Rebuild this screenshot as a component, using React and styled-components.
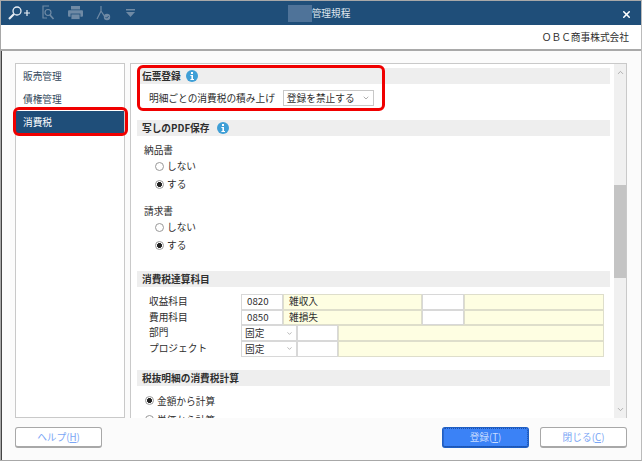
import React from "react";
import styled, { createGlobalStyle } from "styled-components";
import { ChevronUp, ChevronDown, X } from "lucide-react";

const Global = createGlobalStyle`
  html, body { margin: 0; padding: 0; background: #fff; }
  body { font-family: "Noto Sans CJK JP", "Liberation Sans", sans-serif; font-size: 9.7px; color: #2e2e2e; }
`;

const App = () => (
  <Window>
    <Global />
    <TitleBar>
      <Tools>
        <SearchPlusIcon />
        <PreviewIcon />
        <PrintIcon />
        <ApproveIcon />
        <MenuIcon />
      </Tools>
      <Title>
        <Masked />
        管理規程
      </Title>
      <CloseBtn>
        <X size={11} strokeWidth={3.4} color="#fff" />
      </CloseBtn>
    </TitleBar>
    <CompanyBar>ＯＢＣ商事株式会社</CompanyBar>
    <Body>
      <Main>
        <Sidebar>
          <NavItem>販売管理</NavItem>
          <NavItem>債権管理</NavItem>
          <NavItem $active>消費税</NavItem>
        </Sidebar>
        <Panel>
          <Content>
            <SectionHead>
              伝票登録 <InfoIcon gap={5} />
            </SectionHead>
            <SlipRow>
              明細ごとの消費税の積み上げ
              <Select>
                登録を禁止する
                <ChevronDown size={8} color="#888" />
              </Select>
            </SlipRow>

            <SectionHead $top={14}>
              写しのPDF保存 <InfoIcon gap={8} />
            </SectionHead>
            <GroupLabel $top={6}>納品書</GroupLabel>
            <Radio label="しない" />
            <Radio label="する" checked tall />
            <GroupLabel $top={9}>請求書</GroupLabel>
            <Radio label="しない" />
            <Radio label="する" checked tall />

            <SectionHead $top={16}>消費税達算科目</SectionHead>
            <AccountGrid>
              <AccountLabel>収益科目</AccountLabel>
              <WhiteCell $pad={5}>0820</WhiteCell>
              <YellowCell>雑収入</YellowCell>
              <WhiteCell />
              <YellowCell />

              <AccountLabel>費用科目</AccountLabel>
              <WhiteCell $pad={5}>0850</WhiteCell>
              <YellowCell>雑損失</YellowCell>
              <WhiteCell />
              <YellowCell />

              <AccountLabel>部門</AccountLabel>
              <FixedRow />

              <AccountLabel>プロジェクト</AccountLabel>
              <FixedRow />
            </AccountGrid>

            <SectionHead $top={14}>税抜明細の消費税計算</SectionHead>
            <CalcRadios>
              <Radio label="金額から計算" checked flush />
              <Radio label="単価から計算" flush />
            </CalcRadios>
          </Content>
          <ScrollTrack>
            <ChevronUp size={9} color="#999" />
            <ScrollThumb />
            <ChevronDown size={9} color="#999" />
          </ScrollTrack>
        </Panel>
      </Main>
      <Footer>
        <Button>
          ヘルプ(<u>H</u>)
        </Button>
        <FooterRight>
          <Button $primary>
            登録(<u>T</u>)
          </Button>
          <Button>
            閉じる(<u>C</u>)
          </Button>
        </FooterRight>
      </Footer>
    </Body>
    <Callout $x={136} $y={65} $w={248} $h={46} />
    <Callout $x={12} $y={107} $w={115} $h={29} />
  </Window>
);

export default App;

const Radio = ({ label, checked, flush, tall }) => (
  <RadioRow $flush={flush} $tall={tall}>
    <RadioDot $checked={checked} />
    {label}
  </RadioRow>
);

const FixedRow = () => (
  <FixedCells>
    <FixedSelect>
      固定
      <ChevronDown size={7} color="#888" />
    </FixedSelect>
    <WhiteCell />
    <YellowCell />
  </FixedCells>
);

const InfoGlyph = styled.svg`
  margin-left: ${(p) => p.$gap}px;
`;

const InfoIcon = ({ gap }) => (
  <InfoGlyph $gap={gap} width="12" height="12" viewBox="0 0 12 12">
    <circle cx="6" cy="6" r="6" fill="#3f9fd6" />
    <rect x="5" y="2" width="2" height="2" fill="#fff" />
    <path d="M4.4 5h2.6v4h1v1H4.4V9h1V6h-1z" fill="#fff" />
  </InfoGlyph>
);

const SearchPlusIcon = () => (
  <svg width="24" height="16" viewBox="0 0 24 16" fill="none" stroke="#e8eef5">
    <circle cx="10" cy="6" r="4" strokeWidth="1.3" />
    <path d="M7 9 2 14" strokeWidth="2.2" />
    <path d="M17 8h6M20 5v6" strokeWidth="1.2" />
  </svg>
);

const PreviewIcon = () => (
  <svg width="14" height="16" viewBox="0 0 14 16" fill="none" stroke="#6f8aa5" strokeWidth="1.2">
    <path d="M8 1H2v12h4" />
    <circle cx="7" cy="7.5" r="3" />
    <path d="m9 10 3.5 4" strokeWidth="1.7" />
  </svg>
);

const PrintIcon = () => (
  <svg width="15" height="14" viewBox="0 0 15 14" fill="#6f8aa5">
    <rect x="3" y="0" width="9" height="3.5" />
    <rect x="0" y="4.2" width="15" height="6.5" rx="1" />
    <rect x="3" y="8" width="9" height="5.5" stroke="#1f4e79" strokeWidth="0.8" />
  </svg>
);

const ApproveIcon = () => (
  <svg width="15" height="16" viewBox="0 0 15 16" fill="none" stroke="#6f8aa5" strokeWidth="1.2">
    <path d="M5 1 5 6 1 14M5 6l4 6" />
    <circle cx="11" cy="12" r="3.2" fill="#6f8aa5" stroke="none" />
    <path d="m9.5 12 1.2 1.2 2-2.2" stroke="#1f4e79" strokeWidth="0.9" />
  </svg>
);

const MenuIcon = () => (
  <svg width="9" height="8" viewBox="0 0 9 8" fill="#6f8aa5">
    <rect width="9" height="1.5" />
    <path d="M0 3h9L4.5 8z" />
  </svg>
);

const Window = styled.div`
  position: relative;
  width: 642px;
  height: 461px;
  box-sizing: border-box;
  display: flex;
  flex-direction: column;
  border: 1px solid #a8a8a8;
  border-right-color: #bbb;
  overflow: hidden;
  background: #fbfbfb;
`;

const TitleBar = styled.div`
  height: 24px;
  flex: none;
  background: #1f4e79;
  display: grid;
  grid-template-columns: 1fr auto 1fr;
  align-items: center;
`;

const Tools = styled.div`
  display: flex;
  align-items: center;
  padding-left: 6px;
  & > svg:nth-child(2) { margin-left: 10px; }
  & > svg:nth-child(3) { margin-left: 13px; }
  & > svg:nth-child(4) { margin-left: 13px; }
  & > svg:nth-child(5) { margin-left: 15px; }
`;

const Title = styled.div`
  display: flex;
  align-items: center;
  color: #dfe6ee;
  font-size: 9.7px;
  line-height: 24px;
  margin-left: -4px;
  height: 24px;
`;

const Masked = styled.span`
  width: 24px;
  height: 17px;
  background: #4f7399;
`;

const CloseBtn = styled.div`
  justify-self: end;
  display: flex;
  padding: 3px 9px 0 0;
`;

const CompanyBar = styled.div`
  height: 26px;
  flex: none;
  box-sizing: border-box;
  background: #fff;
  border-bottom: 2px solid #a9a9a9;
  text-align: right;
  padding-right: 12px;
  font-size: 9.7px;
  line-height: 24px;
`;

const Body = styled.div`
  flex: 1;
  display: flex;
  flex-direction: column;
  min-height: 0;
  border-left: 1px solid #444;
  padding: 12px 14px 13px 13px;
  gap: 9px;
`;

const Main = styled.div`
  height: 355px;
  flex: none;
  display: flex;
  gap: 5px;
`;

const Sidebar = styled.div`
  width: 110px;
  flex: none;
  box-sizing: border-box;
  border: 1px solid #c9c9c9;
  background: #fff;
  padding-top: 1px;
`;

const NavItem = styled.div`
  height: 23px;
  padding-left: 7px;
  line-height: 23px;
  color: ${(p) => (p.$active ? "#fff" : "#33475b")};
  background: ${(p) => (p.$active ? "#1f4e79" : "transparent")};
`;

const Panel = styled.div`
  flex: 1;
  min-width: 0;
  display: flex;
  box-sizing: border-box;
  border: 1px solid #c9c9c9;
  border-bottom: none;
  background: #fff;
`;

const Content = styled.div`
  flex: 1;
  min-width: 0;
  overflow: hidden;
  padding: 4px 4px 0 6px;
`;

const SectionHead = styled.div`
  height: 16px;
  margin-top: ${(p) => p.$top || 0}px;
  background: #eeeeee;
  display: flex;
  align-items: center;
  padding-left: 5px;
  font-weight: 700;
`;

const SlipRow = styled.div`
  display: flex;
  align-items: center;
  height: 16px;
  margin-top: 6px;
  padding-left: 12px;
  white-space: nowrap;
`;

const Select = styled.div`
  width: 91px;
  height: 16px;
  box-sizing: border-box;
  margin-left: 8px;
  border: 1px solid #c8c8c8;
  display: flex;
  align-items: center;
  justify-content: space-between;
  padding: 0 3px;
  background: #fff;
`;

const GroupLabel = styled.div`
  margin-top: ${(p) => p.$top}px;
  height: 16px;
  line-height: 16px;
  padding-left: 7px;
`;

const RadioRow = styled.div`
  height: ${(p) => (p.$flush ? 19 : p.$tall ? 20 : 16)}px;
  display: flex;
  align-items: center;
  gap: 3px;
  padding-left: ${(p) => (p.$flush ? 8 : 18)}px;
`;

const RadioDot = styled.span`
  width: 9px;
  height: 9px;
  box-sizing: border-box;
  border-radius: 50%;
  border: 1px solid #999;
  background: ${(p) =>
    p.$checked ? "radial-gradient(circle, #222 0 2.2px, #fff 2.7px)" : "#fff"};
`;

const AccountGrid = styled.div`
  box-sizing: border-box;
  width: 467px;
  margin-top: 7px;
  display: grid;
  grid-template-columns: 92px 42px 139px 42px 1fr;
  grid-auto-rows: 15.5px;
  padding-left: 12px;
`;

const AccountLabel = styled.div`
  line-height: 15px;
`;

const WhiteCell = styled.div`
  box-sizing: border-box;
  border: 1px solid #d8d8d8;
  background: #fff;
  line-height: 13px;
  padding-left: ${(p) => p.$pad || 0}px;
`;

const YellowCell = styled.div`
  box-sizing: border-box;
  border: 1px solid #dedecb;
  background: #fefee2;
  line-height: 13px;
  padding-left: 5px;
`;

const FixedCells = styled.div`
  grid-column: 2 / -1;
  display: grid;
  grid-template-columns: 56px 41px 1fr;
`;

const FixedSelect = styled.div`
  box-sizing: border-box;
  border: 1px solid #d8d8d8;
  background: #fff;
  display: flex;
  align-items: center;
  justify-content: space-between;
  padding: 0 3px;
`;

const CalcRadios = styled.div`
  margin-top: 5px;
`;

const ScrollTrack = styled.div`
  width: 12px;
  flex: none;
  background: #f0f0f0;
  display: flex;
  flex-direction: column;
  align-items: center;
  padding: 4px 0;
  box-sizing: border-box;
  justify-content: space-between;
  position: relative;
`;

const ScrollThumb = styled.div`
  position: absolute;
  top: 121px;
  left: 0;
  width: 12px;
  height: 93px;
  background: #c4c4c4;
`;

const Footer = styled.div`
  display: flex;
  justify-content: space-between;
`;

const FooterRight = styled.div`
  display: flex;
  gap: 11px;
`;

const Button = styled.div`
  width: 87px;
  height: 21px;
  box-sizing: border-box;
  border-radius: 3px;
  border: 1px solid ${(p) => (p.$primary ? "#1f5fc4" : "#a8a8a8")};
  border-bottom-width: 2px;
  background: ${(p) => (p.$primary ? "#3b82f6" : "#fff")};
  color: ${(p) => (p.$primary ? "#c7dbff" : "#7ba6f5")};
  display: flex;
  align-items: center;
  justify-content: center;
  outline: ${(p) => (p.$primary ? "1px dotted #1d4fa8" : "none")};
  outline-offset: -2px;
`;

const Callout = styled.div`
  position: absolute;
  left: ${(p) => p.$x}px;
  top: ${(p) => p.$y - 1}px;
  width: ${(p) => p.$w}px;
  height: ${(p) => p.$h}px;
  box-sizing: border-box;
  border: 3px solid #f00000;
  border-radius: 6px;
`;
